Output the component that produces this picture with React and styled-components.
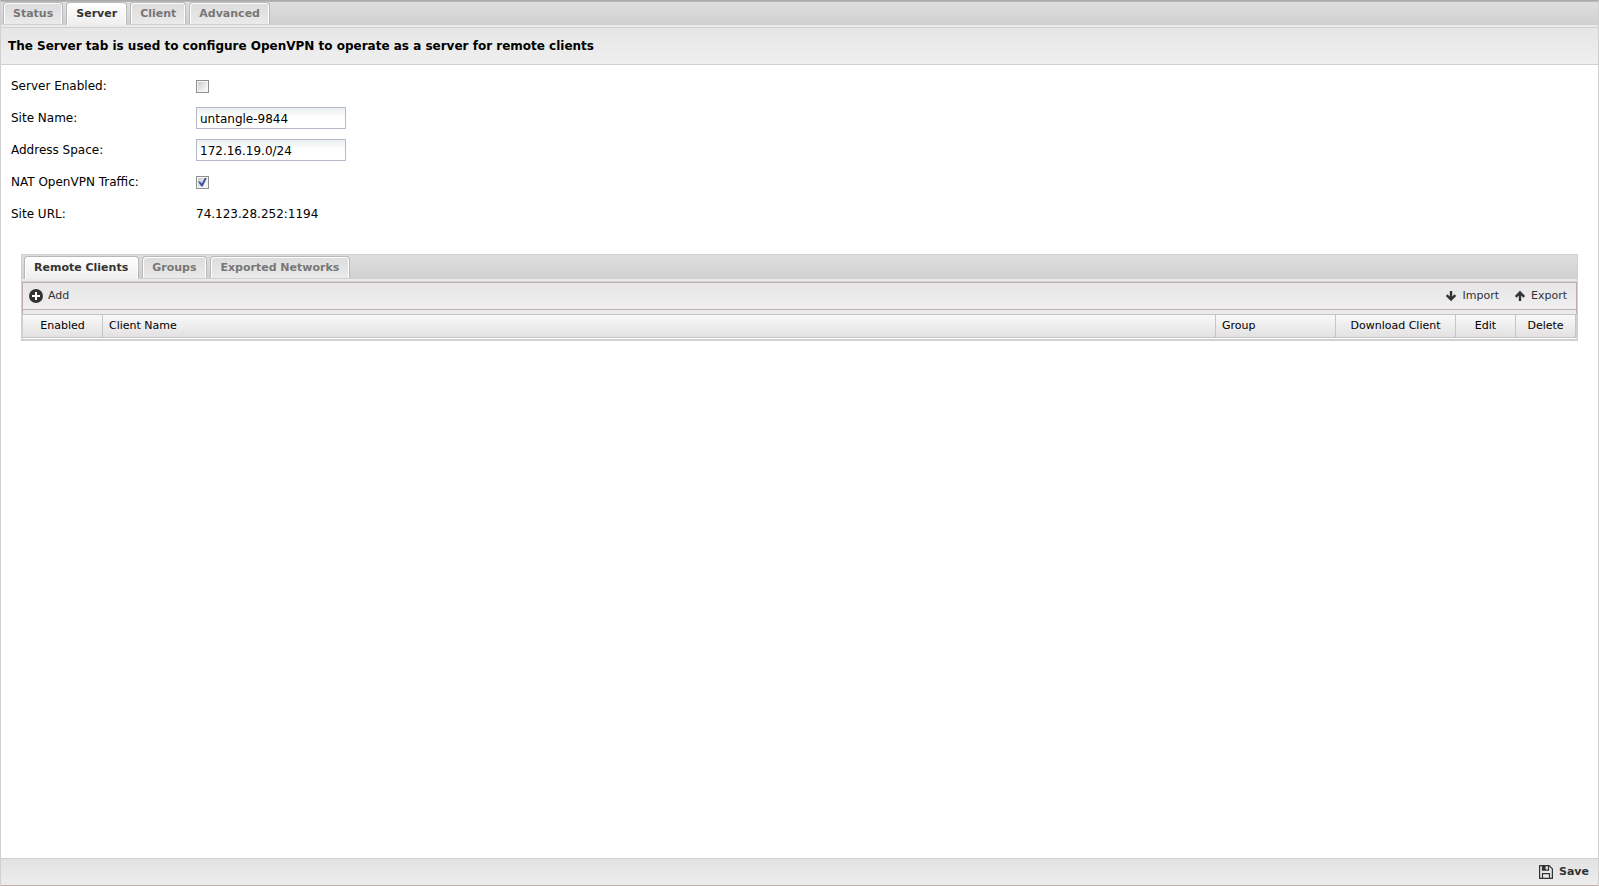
import React, { useState } from "react";
import styled, { createGlobalStyle } from "styled-components";

const GlobalStyle = createGlobalStyle`
  * {
    box-sizing: border-box;
  }

  body {
    margin: 0;
    background: #fff;
    color: #000;
    font-family: "DejaVu Sans", Verdana, sans-serif;
    font-size: 12px;
  }

  button, input {
    font-family: inherit;
  }
`;

const Page = styled.div`
  display: flex;
  flex-direction: column;
  min-height: 100vh;
  border: 1px solid #d0d0d0;
  border-top: 1px solid #a9a9a9;
  border-bottom: none;
`;

const TabBar = styled.div`
  display: flex;
  align-items: flex-end;
  gap: 3px;
  height: ${(props) => (props.$inner ? 25 : 24)}px;
  padding: 0 2px;
  background: linear-gradient(#dedede, #d0d0d0);
  border-top: 1px solid ${(props) => (props.$inner ? "#d0d0d0" : "#b8b8b8")};
`;

const TabStrip = styled.div`
  height: 3px;
  background: #eaeaea;
  border-bottom: 1px solid #d0d0d0;
`;

const Tab = styled.button`
  height: ${(props) => (props.$active ? 23 : 22)}px;
  margin-bottom: ${(props) => (props.$active ? 0 : 1)}px;
  padding: 0 ${(props) => (props.$inner ? 10 : 9)}px ${(props) => (props.$active ? 1 : 0)}px 9px;
  border: 1px solid #b8b8b8;
  border-bottom: none;
  border-radius: 4px 4px 0 0;
  background: ${(props) =>
    props.$active ? "linear-gradient(#fff, #eee)" : "linear-gradient(#dcdcdc, #eaeaea)"};
  box-shadow: inset 1px 1px 0 #fff, inset -1px 0 0 #fff;
  color: ${(props) => (props.$active ? "#333" : "#777")};
  font-size: 11px;
  font-weight: bold;
  line-height: 13px;
  white-space: nowrap;
  cursor: pointer;
`;

const Title = styled.h1`
  margin: 0;
  padding: 9px 7px;
  border-bottom: 1px solid #d0d0d0;
  background: linear-gradient(#e6e6e6, #efefef);
  font-size: 12px;
  line-height: 18px;
`;

const Content = styled.main`
  flex: 1;
  padding: 5px 20px 20px;
`;

const Form = styled.form`
  display: grid;
  grid-template-columns: 185px 150px;
  grid-auto-rows: 32px;
  align-items: center;
  margin: 0 -10px 24px;
`;

const Label = styled.label`
  line-height: 16px;
`;

const TextInput = styled.input`
  width: 150px;
  height: 22px;
  padding: 2px 3px 0;
  border: 1px solid #b5b8c8;
  background: linear-gradient(#e9eeee, #fff 9px);
  font-size: 12px;
  outline: none;
`;

const Check = styled.input`
  appearance: none;
  display: grid;
  place-items: center;
  width: 13px;
  height: 13px;
  margin: 0;
  border: 1px solid #8f8f8f;
  background: linear-gradient(135deg, #cbccd2, #f6f6f6 85%) content-box, #f6f6f6;
  padding: 1px;

  &:checked::before {
    content: "";
    width: 9px;
    height: 9px;
    background: #3c569d;
    clip-path: polygon(0 45%, 24% 45%, 42% 68%, 78% 0, 100% 0, 52% 100%, 36% 100%);
  }
`;

const Panel = styled.section`
  border: 1px solid #d0d0d0;
  border-top: none;
  border-bottom-width: 2px;
`;

const Toolbar = styled.div`
  display: flex;
  align-items: center;
  justify-content: space-between;
  height: 28px;
  padding: 0 9px 0 6px;
  border: 1px solid #bfb0b0;
  background: linear-gradient(#e6e6e6, #efefef);
`;

const ToolGroup = styled.div`
  display: flex;
  gap: 15px;
`;

const ToolButton = styled.button`
  display: flex;
  align-items: center;
  gap: ${(props) => props.$gap || 5}px;
  padding: 0;
  border: none;
  background: none;
  color: #333;
  font-size: 11px;
  font-weight: ${(props) => (props.$bold ? "bold" : "normal")};
  line-height: 16px;
  cursor: pointer;
`;

const HeaderGap = styled.div`
  height: 4px;
  background: #eaeaea;
  border: solid #bfb0b0;
  border-width: 0 1px;
`;

const Grid = styled.table`
  width: 100%;
  table-layout: fixed;
  border-spacing: 0;
  border: solid #d0d0d0;
  border-width: 0 1px;
  border-bottom: 1px solid #fff;
`;

const HeadCell = styled.th`
  width: ${(props) => (props.$width ? `${props.$width}px` : "auto")};
  height: 24px;
  padding: 0 6px 2px;
  border: solid #c5c5c5;
  border-width: 1px 1px 1px 0;
  background: linear-gradient(#f9f9f9, #e3e1e2);
  font-size: 11px;
  font-weight: normal;
  line-height: 13px;
  text-align: ${(props) => props.$align || "left"};
  white-space: nowrap;
`;

const Footer = styled.footer`
  display: flex;
  justify-content: flex-end;
  height: 28px;
  padding: 0 9px;
  border-top: 1px solid #d0d0d0;
  border-bottom: 1px solid #bfb0b0;
  background: linear-gradient(#e3e3e3, #ececec);
`;

const AddIcon = () => (
  <svg width="14" height="14" viewBox="0 0 14 14">
    <circle cx="7" cy="7" r="7" fill="#333" />
    <path d="M7 3v8M3 7h8" stroke="#fff" strokeWidth="2" />
  </svg>
);

const ArrowIcon = ({ up }) => (
  <svg width="12" height="12" viewBox="0 0 12 12">
    <path
      d={up ? "M6 11V2.5M1.7 6.8L6 2.5l4.3 4.3" : "M6 1v8.5M1.7 5.2L6 9.5l4.3-4.3"}
      fill="none"
      stroke="#333"
      strokeWidth="2.4"
    />
  </svg>
);

const SaveIcon = () => (
  <svg width="14" height="14" viewBox="0 0 14 14" fill="none" stroke="#333">
    <path d="M.6.6h9.6l3.2 3.2v9.6H.6z" strokeWidth="1.2" strokeLinejoin="round" />
    <path d="M3.5 13V8.6h7V13" strokeWidth="1.2" />
    <path d="M3.5 1v4.2h6V1" strokeWidth="1.2" />
    <path d="M4 1h2.6v4H4z" fill="#333" stroke="none" />
  </svg>
);

const mainTabs = ["Status", "Server", "Client", "Advanced"];
const serverTabs = ["Remote Clients", "Groups", "Exported Networks"];

const columns = [
  { name: "Enabled", width: 80, align: "center" },
  { name: "Client Name" },
  { name: "Group", width: 120 },
  { name: "Download Client", width: 120, align: "center" },
  { name: "Edit", width: 60, align: "center" },
  { name: "Delete", width: 60, align: "center" },
];

const Tabs = ({ items, initial, inner }) => {
  const [active, setActive] = useState(initial);

  return (
    <>
      <TabBar role="tablist" $inner={inner}>
        {items.map((item) => (
          <Tab
            key={item}
            type="button"
            role="tab"
            aria-selected={item === active}
            $active={item === active}
            $inner={inner}
            onClick={() => setActive(item)}
          >
            {item}
          </Tab>
        ))}
      </TabBar>
      <TabStrip />
    </>
  );
};

const App = () => {
  const [settings, setSettings] = useState({
    enabled: false,
    siteName: "untangle-9844",
    addressSpace: "172.16.19.0/24",
    nat: true,
  });

  const update = (key, value) => setSettings({ ...settings, [key]: value });

  return (
    <Page>
      <GlobalStyle />
      <Tabs items={mainTabs} initial="Server" />
      <Title>The Server tab is used to configure OpenVPN to operate as a server for remote clients</Title>
      <Content>
        <Form onSubmit={(e) => e.preventDefault()}>
          <Label htmlFor="enabled">Server Enabled:</Label>
          <Check
            id="enabled"
            type="checkbox"
            checked={settings.enabled}
            onChange={(e) => update("enabled", e.target.checked)}
          />
          <Label htmlFor="siteName">Site Name:</Label>
          <TextInput
            id="siteName"
            type="text"
            value={settings.siteName}
            onChange={(e) => update("siteName", e.target.value)}
          />
          <Label htmlFor="addressSpace">Address Space:</Label>
          <TextInput
            id="addressSpace"
            type="text"
            value={settings.addressSpace}
            onChange={(e) => update("addressSpace", e.target.value)}
          />
          <Label htmlFor="nat">NAT OpenVPN Traffic:</Label>
          <Check
            id="nat"
            type="checkbox"
            checked={settings.nat}
            onChange={(e) => update("nat", e.target.checked)}
          />
          <Label htmlFor="siteUrl">Site URL:</Label>
          <output id="siteUrl">74.123.28.252:1194</output>
        </Form>

        <Panel>
          <Tabs items={serverTabs} initial="Remote Clients" inner />
          <Toolbar>
            <ToolButton type="button">
              <AddIcon />
              Add
            </ToolButton>
            <ToolGroup>
              <ToolButton type="button">
                <ArrowIcon />
                Import
              </ToolButton>
              <ToolButton type="button">
                <ArrowIcon up />
                Export
              </ToolButton>
            </ToolGroup>
          </Toolbar>
          <HeaderGap />
          <Grid>
            <thead>
              <tr>
                {columns.map((col) => (
                  <HeadCell key={col.name} $width={col.width} $align={col.align}>
                    {col.name}
                  </HeadCell>
                ))}
              </tr>
            </thead>
          </Grid>
        </Panel>
      </Content>
      <Footer>
        <ToolButton type="button" $bold $gap={6}>
          <SaveIcon />
          Save
        </ToolButton>
      </Footer>
    </Page>
  );
};

export default App;
